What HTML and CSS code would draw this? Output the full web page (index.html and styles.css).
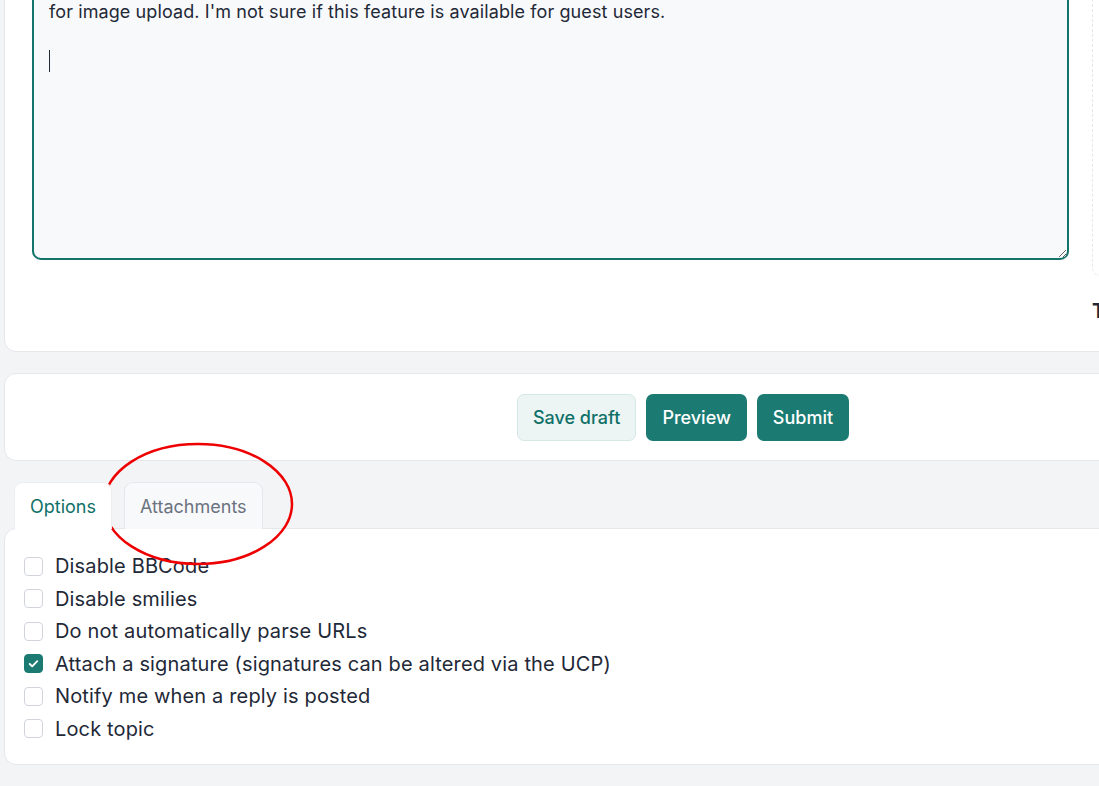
FILE: index.html
```html
<!DOCTYPE html>
<html lang="en">
<head>
  <meta charset="utf-8">
  <meta name="viewport" content="width=device-width, initial-scale=1.0">
  <title>Post a reply</title>
  <link rel="stylesheet" href="styles.css">
</head>
<body>
<div class="page">
  <div class="panel panel-editor">
    <div class="editor-col">
      <div class="editor-wrap">
        <textarea class="message" id="message">I'm trying to attach a screenshot to my post but I can't see any button
for image upload. I'm not sure if this feature is available for guest users.

</textarea>
        <span class="caret"></span>
      </div>
    </div>
    <div class="side-col">
      <div class="smilies-box"></div>
      <h3 class="side-title">Topic review</h3>
    </div>
  </div>

  <div class="panel panel-actions">
    <button type="button" class="btn btn-light">Save draft</button>
    <button type="button" class="btn btn-primary">Preview</button>
    <button type="button" class="btn btn-primary">Submit</button>
  </div>

  <div class="tabs">
    <div class="tab-list">
      <button type="button" class="tab tab-active">Options</button>
      <button type="button" class="tab">Attachments</button>
    </div>
    <div class="panel panel-options">
      <label class="opt"><input type="checkbox"><span>Disable BBCode</span></label>
      <label class="opt"><input type="checkbox"><span>Disable smilies</span></label>
      <label class="opt"><input type="checkbox"><span>Do not automatically parse URLs</span></label>
      <label class="opt"><input type="checkbox" checked><span>Attach a signature (signatures can be altered via the UCP)</span></label>
      <label class="opt"><input type="checkbox"><span>Notify me when a reply is posted</span></label>
      <label class="opt"><input type="checkbox"><span>Lock topic</span></label>
    </div>
  </div>

  <div class="panel panel-next"></div>
</div>

<svg class="mark" width="200" height="130" viewBox="0 0 200 130">
  <ellipse cx="100" cy="65" rx="94" ry="60" fill="none" stroke="#ee0000" stroke-width="2.5"/>
</svg>
</body>
</html>
```

FILE: styles.css
```css
body {
  margin: 0;
  background-color: #f3f4f6;
  font-family: Inter, "Noto Sans", sans-serif;
  color: #1f2937;
  overflow: hidden;
}
.page {
  width: 1358px;
  margin-top: -59px;
  padding-left: 4px;
  display: flex;
  flex-direction: column;
  gap: 21px;
}
.panel {
  background-color: #fff;
  border: 1px solid #e5e7eb;
  border-radius: 12px;
}
.panel-editor {
  display: flex;
  align-items: flex-start;
  gap: 23px;
  padding: 19px 28px 0 27px;
}
.editor-col {
  width: 1037px;
  flex: none;
  padding-bottom: 91px;
}
.editor-wrap {
  position: relative;
}
.message {
  display: block;
  box-sizing: border-box;
  width: 100%;
  height: 299px;
  margin: 0;
  padding: 12px 15px;
  border: 2px solid #14736b;
  border-radius: 9px;
  background-color: #f8f9fb;
  color: #1f2937;
  caret-color: transparent;
  font-family: Inter, "Noto Sans", sans-serif;
  font-size: 18px;
  letter-spacing: 0.1px;
  line-height: 24.5px;
  resize: vertical;
  outline: none;
}
.caret {
  position: absolute;
  left: 17px;
  top: 89px;
  width: 1px;
  height: 22px;
  background-color: #1f2937;
}
.side-col {
  flex: 1;
}
.smilies-box {
  height: 334px;
  margin-top: -19px;
  border: 1px dashed #e5e7eb;
  border-top: 0;
  border-radius: 0 0 10px 10px;
}
.side-title {
  margin: 23px 0 0;
  font-size: 20px;
  line-height: 22px;
  font-weight: 700;
  color: #1f2937;
}
.panel-actions {
  display: flex;
  justify-content: center;
  gap: 10px;
  padding: 20px 0 19px;
}
.btn {
  height: 47px;
  padding: 0 15px;
  border-radius: 7px;
  border: 1px solid transparent;
  font-family: Inter, "Noto Sans", sans-serif;
  font-size: 18px;
  font-weight: 500;
}
.btn-light {
  background-color: #edf5f4;
  border-color: #d6e8e6;
  color: #0f7068;
}
.btn-primary {
  background-color: #1b7b73;
  color: #fff;
}
.tab-list {
  display: flex;
  gap: 12px;
  padding-left: 10px;
  position: relative;
  z-index: 1;
  margin-bottom: -1px;
}
.tab {
  height: 47px;
  padding: 0 15px;
  border: 1px solid #e5e7eb;
  border-bottom: 0;
  border-radius: 9px 9px 0 0;
  background-color: #f8f9fb;
  color: #6b7280;
  font-family: Inter, "Noto Sans", sans-serif;
  font-size: 18px;
}
.tab-active {
  background-color: #fff;
  color: #0f7068;
  border-color: #eceef1;
}
.panel-options {
  display: flex;
  flex-direction: column;
  padding: 21px 19px 19px;
}
.opt {
  display: flex;
  align-items: center;
  gap: 12px;
  height: 32.5px;
  font-size: 20px;
  letter-spacing: 0.15px;
  color: #1f2937;
}
.opt input {
  appearance: none;
  width: 19px;
  height: 19px;
  margin: 0;
  border: 1px solid #d1d5db;
  border-radius: 4px;
  background-color: #fff;
}
.opt input:checked {
  background-color: #1b7b73;
  border-color: #1b7b73;
  background-image: url("data:image/svg+xml,%3Csvg xmlns='http://www.w3.org/2000/svg' viewBox='0 0 16 16'%3E%3Cpath d='M4 8.5l2.6 2.5L12 5.5' fill='none' stroke='%23fff' stroke-width='2' stroke-linecap='round' stroke-linejoin='round'/%3E%3C/svg%3E");
  background-size: 15px 15px;
  background-position: center;
  background-repeat: no-repeat;
}
.panel-next {
  height: 40px;
}
.mark {
  position: absolute;
  left: 98px;
  top: 439px;
}
```
